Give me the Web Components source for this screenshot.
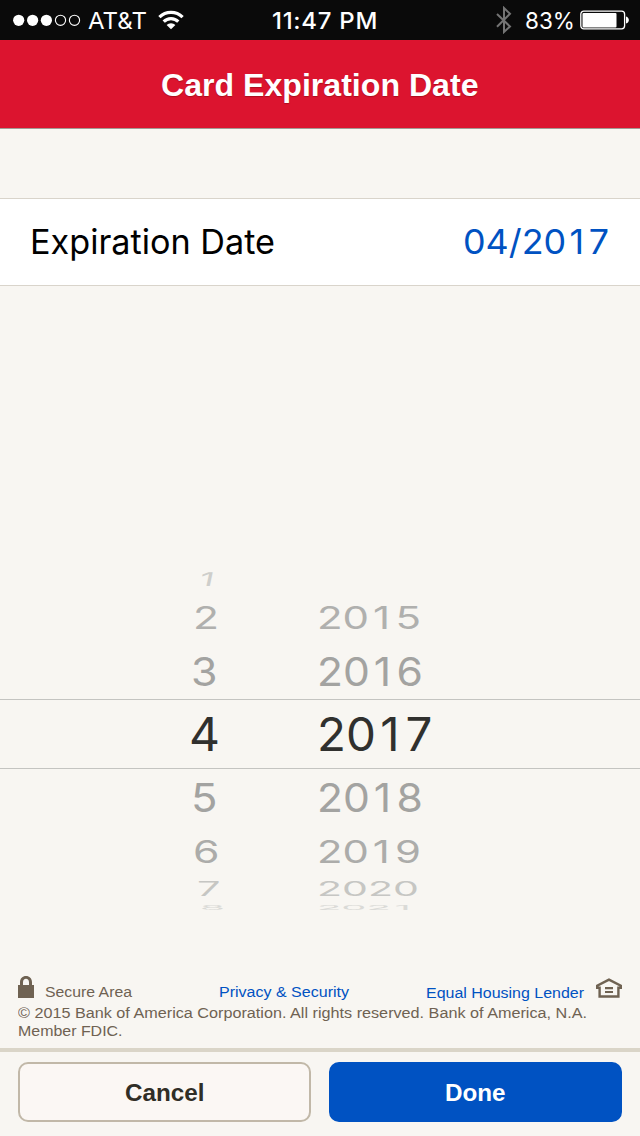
<!DOCTYPE html>
<html lang="en">
<head>
<meta charset="utf-8">
<title>Card Expiration Date</title>
<style>
html,body{margin:0;padding:0}
body{width:640px;height:1136px;overflow:hidden;background:#f8f6f2;font-family:"Liberation Sans",Arial,sans-serif}
</style>
</head>
<body>
<card-expiration-screen></card-expiration-screen>
<script>
const define = (name, html, setup) => customElements.define(name, class extends HTMLElement {
  connectedCallback() {
    if (this.shadowRoot) return;
    this.attachShadow({mode: 'open'}).innerHTML = html;
    if (setup) setup(this, this.shadowRoot);
  }
});

// One line of text, widened so that it fills the advance width given in "w".
// With "digits", the narrow 1 is padded out to the pitch of the other figures.
define('fitted-text', `<style>
:host{display:inline-block;white-space:pre;flex:none}
span{display:inline-block;transform-origin:0 50%}
i{font-style:normal;margin:0 .13em 0 .09em}
</style><span></span>`, (host, root) => {
  const span = root.querySelector('span');
  const text = host.getAttribute('text');
  if (host.hasAttribute('digits')) span.innerHTML = text.replace(/1/g, '<i>1</i>');
  else span.textContent = text;
  const w = parseFloat(host.getAttribute('w'));
  if (w) {
    const natural = span.getBoundingClientRect().width;
    host.style.width = w + 'px';
    span.style.transform = `scaleX(${w / natural})`;
  }
});

define('status-bar', `<style>
:host{display:grid;grid-template-columns:272px 1fr 145px;height:40px;background:#0a0a0a;color:#fff;font:400 23.5px/38px Inter,sans-serif}
div{display:flex;align-items:center;height:40px}
svg{flex:none;display:block}
fitted-text{margin-top:2px}
.left{padding-left:13px}.left fitted-text{margin-left:7px}.wifi{margin-left:11px}
.mid{font-weight:500;letter-spacing:.7px}
.right fitted-text{margin:2px 5px 0 13px}
</style>
<div class="left"><svg width="68" height="14" viewBox="0 0 68 14"><g fill="#fff"><circle cx="5.7" cy="7.3" r="5.6"/><circle cx="19.6" cy="7.3" r="5.6"/><circle cx="33.4" cy="7.3" r="5.6"/></g><g fill="none" stroke="#fff" stroke-width="1.1"><circle cx="47.5" cy="7.3" r="5.1"/><circle cx="61.5" cy="7.3" r="5.1"/></g></svg>
<fitted-text text="AT&amp;T" w="59"></fitted-text>
<svg class="wifi" width="26" height="20" viewBox="0 0 26 20"><g fill="none" stroke="#fff" stroke-width="3.2"><path d="M1.4 7.2a16.4 16.4 0 0 1 23.2 0"/><path d="M5.7 11.7a10.3 10.3 0 0 1 14.6 0"/></g><path d="M13 19.2l-4.4-4.2a6.2 6.2 0 0 1 8.8 0z" fill="#fff"/></svg></div>
<div class="mid"><fitted-text text="11:47 PM" w="106"></fitted-text></div>
<div class="right"><svg width="17" height="28" viewBox="0 0 17 28"><path d="M2 8L15 20.5L9 26V2L15 7.8L2 20.8" fill="none" stroke="#747474" stroke-width="2"/></svg>
<fitted-text text="83%" w="50"></fitted-text>
<svg width="50" height="20" viewBox="0 0 50 20"><rect x=".8" y="1.2" width="43.8" height="17.6" rx="3" fill="none" stroke="#fff" stroke-width="1.3"/><rect x="2.5" y="3" width="34" height="14.6" rx="1" fill="#fff"/><path d="M46 6.5c3.8 1 3.8 6 0 7z" fill="#fff"/></svg></div>`);

define('nav-bar', `<style>
:host{display:flex;justify-content:center;height:88px;box-sizing:content-box;border-bottom:1px solid #a39a94;background:#dc142f;color:#fff;font-size:32px;font-weight:700;line-height:90px;text-shadow:0 1px 1px rgba(80,0,0,.35)}
</style><fitted-text text="Card Expiration Date" w="317.5"></fitted-text>`);

define('value-row', `<style>
:host{display:flex;justify-content:space-between;box-sizing:border-box;height:88px;margin-top:69px;padding:0 31px 0 30px;background:#fff;border:solid #d9d4cb;border-width:1px 0;color:#000;font:400 34.5px/86px Inter,sans-serif}
.value{color:#0052c2}
</style><fitted-text text="Expiration Date" w="245"></fitted-text><fitted-text class="value" digits text="04/2017" w="146"></fitted-text>`);

// A wheel entry: h is the height of the digits once foreshortened.
define('wheel-item', `<style>
:host{display:flex;flex:none;color:#a3a3a1;font:380 41px/1 Inter,sans-serif}
div{display:flex;align-items:center;transform-origin:0 50%}
</style><div></div>`, (host, root) => {
  const get = (k, d) => parseFloat(host.getAttribute(k) || d);
  const size = get('size', 41), h = get('h', 30);
  host.style.cssText += `height:${h}px;margin-top:${get('gap', 0)}px;padding-left:${get('x', 0)}px;font-size:${size}px`;
  const color = host.getAttribute('tone');
  if (color) host.style.color = color;
  const inner = root.querySelector('div');
  inner.style.transform = `scaleY(${h / (size * .745)}) skewX(${get('skew', 0)}deg)`;
  const text = document.createElement('fitted-text');
  const label = host.getAttribute('label');
  text.setAttribute('text', label);
  if (label.length > 1) text.setAttribute('digits', '');
  text.setAttribute('w', host.getAttribute('w') || '');
  inner.append(text);
});

define('date-wheel', `<style>
:host{display:grid;grid-template-columns:316.5px 323.5px;align-items:start;box-sizing:border-box;height:354px;margin-top:270px;padding-top:16.4px;
background:linear-gradient(#c4c4c1,#c4c4c1) 0 143px/100% 1px no-repeat,linear-gradient(#c4c4c1,#c4c4c1) 0 212px/100% 1px no-repeat}
</style>
<div>
<wheel-item label="1" size="38" h="14" x="200" w="18" tone="#cececb" skew="-6"></wheel-item>
<wheel-item label="2" size="40" h="23" gap="19.3" x="193" w="26" tone="#b0b0ae"></wheel-item>
<wheel-item label="3" h="29.5" gap="28.1" x="191" w="26.5"></wheel-item>
<wheel-item label="4" size="46" h="34.3" gap="31.2" x="189" w="31" tone="#30302e"></wheel-item>
<wheel-item label="5" h="29.5" gap="31" x="191" w="26.5"></wheel-item>
<wheel-item label="6" size="40" h="23" gap="27.4" x="193" w="26.5" tone="#acacaa"></wheel-item>
<wheel-item label="7" size="38" h="14.5" gap="19.5" x="196.5" w="23.5" tone="#c6c6c3"></wheel-item>
<wheel-item label="8" size="37" h="5" gap="8.8" x="200" w="25" tone="#dadad7"></wheel-item>
</div>
<div>
<wheel-item label="2015" size="40" h="23" gap="33.3" w="104" tone="#b0b0ae"></wheel-item>
<wheel-item label="2016" h="29.5" gap="28.1" w="106"></wheel-item>
<wheel-item label="2017" size="46" h="34.3" gap="31.2" w="115.5" tone="#30302e"></wheel-item>
<wheel-item label="2018" h="29.5" gap="31" w="106"></wheel-item>
<wheel-item label="2019" size="40" h="23" gap="27.4" w="104" tone="#acacaa"></wheel-item>
<wheel-item label="2020" size="38" h="14.5" gap="19.5" w="102" tone="#c6c6c3"></wheel-item>
<wheel-item label="2021" size="37" h="5" gap="8.8" w="99" tone="#dadad7"></wheel-item>
</div>`);

define('legal-footer', `<style>
:host{display:block;box-sizing:border-box;height:138px;padding:66px 18px 0;color:#6f6252;font-size:15.5px;line-height:18px}
.links{display:flex;align-items:flex-start;height:28px}
.links fitted-text{margin-top:7px}
svg{flex:none;display:block}
a{color:#0052c2;text-decoration:none;display:block}
.lines fitted-text{display:block}
</style>
<div class="links"><svg width="16" height="22" viewBox="0 0 16 22"><path d="M0 9h2V6.2C2 2.4 4.6 0 8 0s6 2.4 6 6.2V9h2v13H0zM5 9h6V6.3C11 4 9.8 2.8 8 2.8S5 4 5 6.3z" fill="#6f6252" fill-rule="evenodd"/></svg>
<fitted-text text="Secure Area" w="87" style="margin-left:10.5px"></fitted-text>
<a style="margin-left:87px"><fitted-text text="Privacy &amp; Security" w="130"></fitted-text></a>
<a style="margin-left:77.5px;padding-top:1px"><fitted-text text="Equal Housing Lender" w="158"></fitted-text></a>
<svg width="26" height="20" viewBox="0 0 26 20" style="margin:2px 0 0 12px"><path d="M13 1.6L1.2 7.7v2.1h2.4v8.7h18.8V9.8h2.4V7.7z" fill="none" stroke="#6f6252" stroke-width="2.4"/><path d="M9 10.1h8M9 14h8" stroke="#6f6252" stroke-width="2.2"/></svg></div>
<div class="lines"><fitted-text text="© 2015 Bank of America Corporation. All rights reserved. Bank of America, N.A." w="569"></fitted-text><fitted-text text="Member FDIC." w="104.5"></fitted-text></div>`);

define('action-button', `<style>
:host{display:block;flex:1}
button{display:flex;justify-content:center;width:100%;height:60px;box-sizing:border-box;padding:0 1px 0 0;margin:0;border:2px solid #c1b8a8;border-radius:10px;background:#fbf7f4;color:#302e26;font:700 24px/58px "Liberation Sans",Arial,sans-serif}
:host([primary]) button{background:#0052c2;border-color:#0052c2;color:#fff}
</style><button><slot></slot></button>`);

define('action-bar', `<style>
:host{display:flex;gap:18px;box-sizing:border-box;height:88px;padding:10px 18px 0;border-top:4px solid #dad5c8;background:#f8f6f2}
</style><action-button><fitted-text text="Cancel" w="79.5"></fitted-text></action-button><action-button primary><fitted-text text="Done" w="60.5"></fitted-text></action-button>`);

define('card-expiration-screen', `<style>
:host{display:flex;flex-direction:column;width:640px;height:1136px;background:#f8f6f2;overflow:hidden}
:host>*{flex:none}
</style><status-bar></status-bar><nav-bar></nav-bar><value-row></value-row><date-wheel></date-wheel><legal-footer></legal-footer><action-bar></action-bar>`);
</script>
</body>
</html>
